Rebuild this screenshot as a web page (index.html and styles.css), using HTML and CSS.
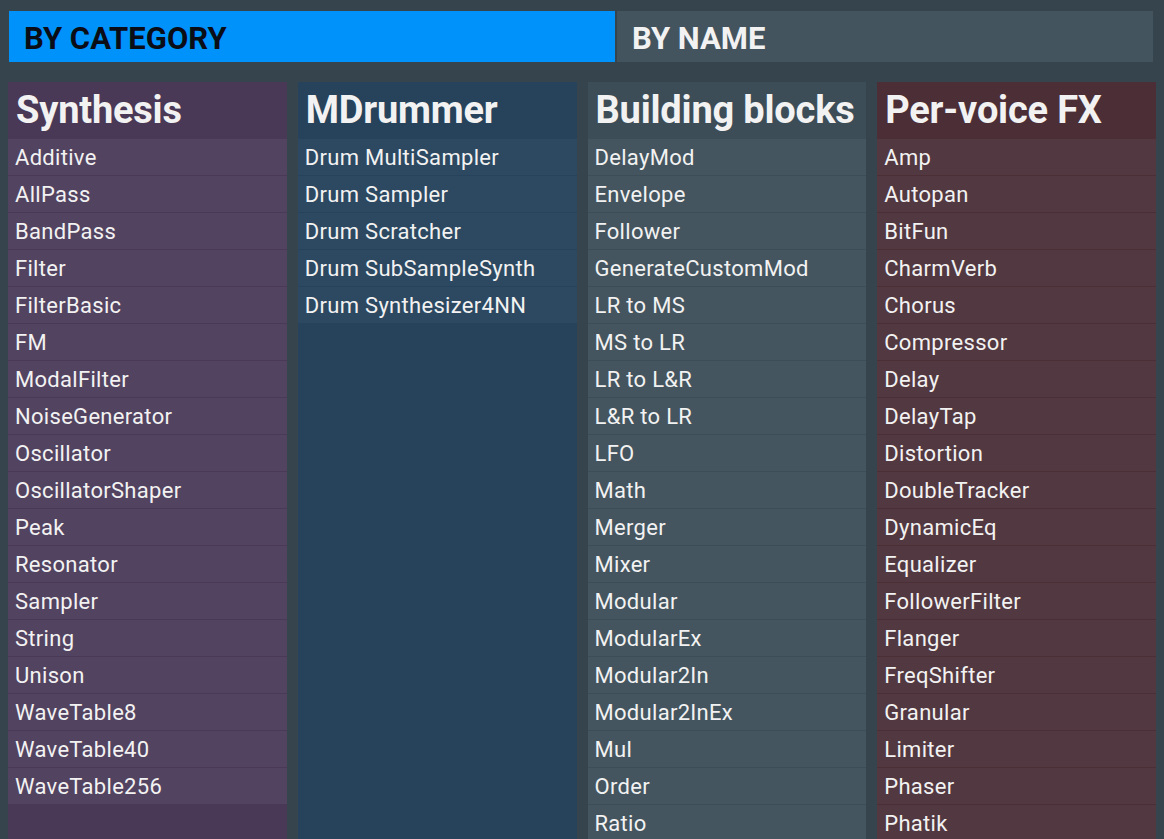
FILE: index.html
```html
<!DOCTYPE html>
<html lang="en">
<head>
	<meta charset="UTF-8">
	<title>Modules</title>
	<link rel="stylesheet" href="styles.css">
</head>
<body>
	<div class="tabs">
		<div class="tab active">BY CATEGORY</div>
		<div class="tab">BY NAME</div>
	</div>
	<div class="columns">
		<div class="col synthesis">
			<h2>Synthesis</h2>
			<ul>
				<li>Additive</li>
				<li>AllPass</li>
				<li>BandPass</li>
				<li>Filter</li>
				<li>FilterBasic</li>
				<li>FM</li>
				<li>ModalFilter</li>
				<li>NoiseGenerator</li>
				<li>Oscillator</li>
				<li>OscillatorShaper</li>
				<li>Peak</li>
				<li>Resonator</li>
				<li>Sampler</li>
				<li>String</li>
				<li>Unison</li>
				<li>WaveTable8</li>
				<li>WaveTable40</li>
				<li>WaveTable256</li>
			</ul>
		</div>
		<div class="col drummer">
			<h2>MDrummer</h2>
			<ul>
				<li>Drum MultiSampler</li>
				<li>Drum Sampler</li>
				<li>Drum Scratcher</li>
				<li>Drum SubSampleSynth</li>
				<li>Drum Synthesizer4NN</li>
			</ul>
		</div>
		<div class="col blocks">
			<h2>Building blocks</h2>
			<ul>
				<li>DelayMod</li>
				<li>Envelope</li>
				<li>Follower</li>
				<li>GenerateCustomMod</li>
				<li>LR to MS</li>
				<li>MS to LR</li>
				<li>LR to L&amp;R</li>
				<li>L&amp;R to LR</li>
				<li>LFO</li>
				<li>Math</li>
				<li>Merger</li>
				<li>Mixer</li>
				<li>Modular</li>
				<li>ModularEx</li>
				<li>Modular2In</li>
				<li>Modular2InEx</li>
				<li>Mul</li>
				<li>Order</li>
				<li>Ratio</li>
			</ul>
		</div>
		<div class="col fx">
			<h2>Per-voice FX</h2>
			<ul>
				<li>Amp</li>
				<li>Autopan</li>
				<li>BitFun</li>
				<li>CharmVerb</li>
				<li>Chorus</li>
				<li>Compressor</li>
				<li>Delay</li>
				<li>DelayTap</li>
				<li>Distortion</li>
				<li>DoubleTracker</li>
				<li>DynamicEq</li>
				<li>Equalizer</li>
				<li>FollowerFilter</li>
				<li>Flanger</li>
				<li>FreqShifter</li>
				<li>Granular</li>
				<li>Limiter</li>
				<li>Phaser</li>
				<li>Phatik</li>
			</ul>
		</div>
	</div>
</body>
</html>
```

FILE: styles.css
```css
html {
	overflow: hidden;
}

body {
	margin: 0;
	padding: 11px 8px 0;
	background: #36454d;
	color: #f2f2f2;
	font-family: Roboto, "Liberation Sans", sans-serif;
}

.tabs {
	display: grid;
	grid-template-columns: 606px 1fr;
	gap: 2px;
	margin: 0 3px 0 1px;
}
.tab {
	height: 51px;
	line-height: 55px;
	padding-left: 15px;
	font-size: 31px;
	font-weight: bold;
	background: #43545e;
	color: #f2f2f2;
}
.tab.active {
	background: #0092fb;
	color: #0b0d16;
}

.columns {
	display: grid;
	grid-template-columns: repeat(4, 1fr);
	gap: 11px;
	margin-top: 20px;
	min-height: 760px;
}

.col h2 {
	margin: 0;
	height: 57px;
	line-height: 57px;
	padding-left: 8px;
	font-size: 38px;
	font-weight: bold;
	letter-spacing: -0.2px;
	white-space: nowrap;
}

ul,
li {
	margin: 0;
	padding: 0;
	list-style: none;
}
.col li {
	height: 35px;
	line-height: 36px;
	padding-top: 1px;
	margin-bottom: 1px;
	padding-left: 7px;
	font-size: 22px;
	letter-spacing: 0.3px;
	white-space: nowrap;
}

.synthesis { background: #4a3956; }
.synthesis li { background: #524360; }
.drummer { background: #26435b; }
.drummer li { background: #2c4961; }
.blocks { background: #3d4d58; }
.blocks li { background: #44555f; }
.fx { background: #4b2e36; }
.fx li { background: #523840; }
```
